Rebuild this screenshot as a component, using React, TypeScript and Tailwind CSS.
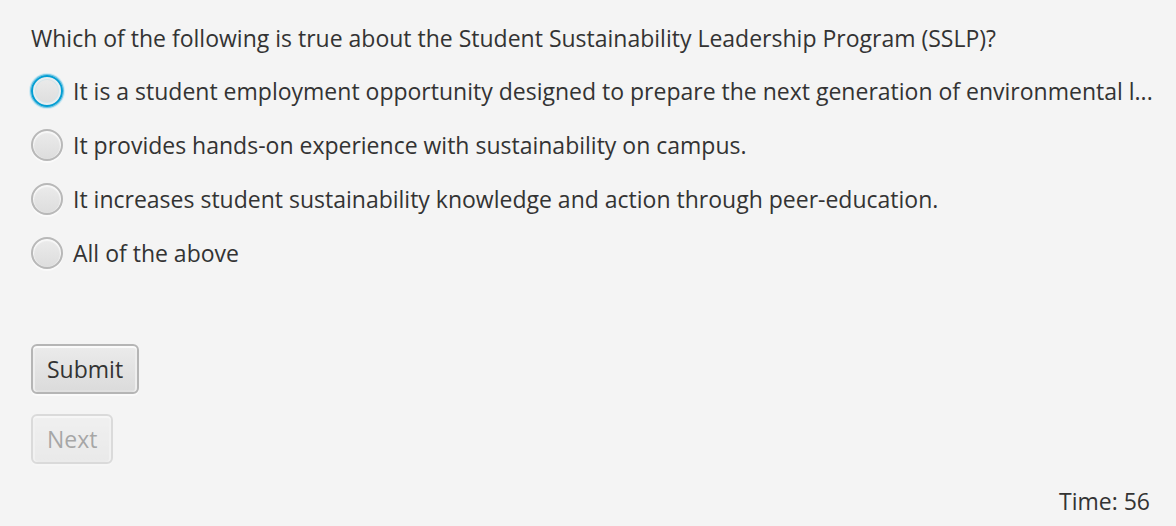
import { useState } from "react";

const options = [
  "It is a student employment opportunity designed to prepare the next generation of environmental l...",
  "It provides hands-on experience with sustainability on campus.",
  "It increases student sustainability knowledge and action through peer-education.",
  "All of the above",
];

const buttonStyle =
  "h-[50px] rounded-md border-2 border-[#b5b5b5] bg-linear-to-b from-[#ececec] to-[#dadada] bg-origin-border px-[14px] shadow-[inset_0_2px_0_#fafafa,inset_2px_0_0_#eeeeee,inset_-2px_0_0_#eeeeee,inset_0_-2px_0_#e0e0e0,0_2px_0_#fafafa]";

export default function App() {
  const [choice, setChoice] = useState<number | null>(null);

  return (
    <main className="flex min-h-screen flex-col bg-[#f4f4f4] px-[31px] pt-[21px] font-['Open_Sans',sans-serif] text-[23px] leading-8 text-[#333333]">
      <fieldset>
        <legend className="pt-px mb-[21px]">
          Which of the following is true about the Student Sustainability Leadership Program (SSLP)?
        </legend>
        <div className="flex flex-col gap-[22px]">
          {options.map((option, i) => (
            <label key={option} className="flex items-center gap-[10px] whitespace-nowrap">
              <input
                type="radio"
                name="answer"
                checked={choice === i}
                onChange={() => setChoice(i)}
                className={
                  "size-8 shrink-0 appearance-none rounded-full border-2 bg-linear-to-b from-[#ececec] to-[#dcdcdc] bg-origin-border outline-none checked:bg-[#333333] " +
                  (i === 0
                    ? "border-[#039ed3] shadow-[0_0_0_1px_#6fc4e2,0_0_0_2px_#d0eaf3,inset_0_0_0_2px_#e8eef0,inset_0_0_0_3px_#d6e4e9]"
                    : "border-[#b8b8b8] shadow-[inset_0_1px_1px_1px_#f8f8f8,0_2px_0_#fafafa]")
                }
              />
              <span>{option}</span>
            </label>
          ))}
        </div>
      </fieldset>
      <div className="mt-[75px] flex flex-col items-start gap-5">
        <button type="button" className={buttonStyle}>
          Submit
        </button>
        <button type="button" disabled className={buttonStyle + " opacity-40"}>
          Next
        </button>
      </div>
      <p className="mt-auto -mr-[5px] pb-[9px] text-right">Time: 56</p>
    </main>
  );
}
